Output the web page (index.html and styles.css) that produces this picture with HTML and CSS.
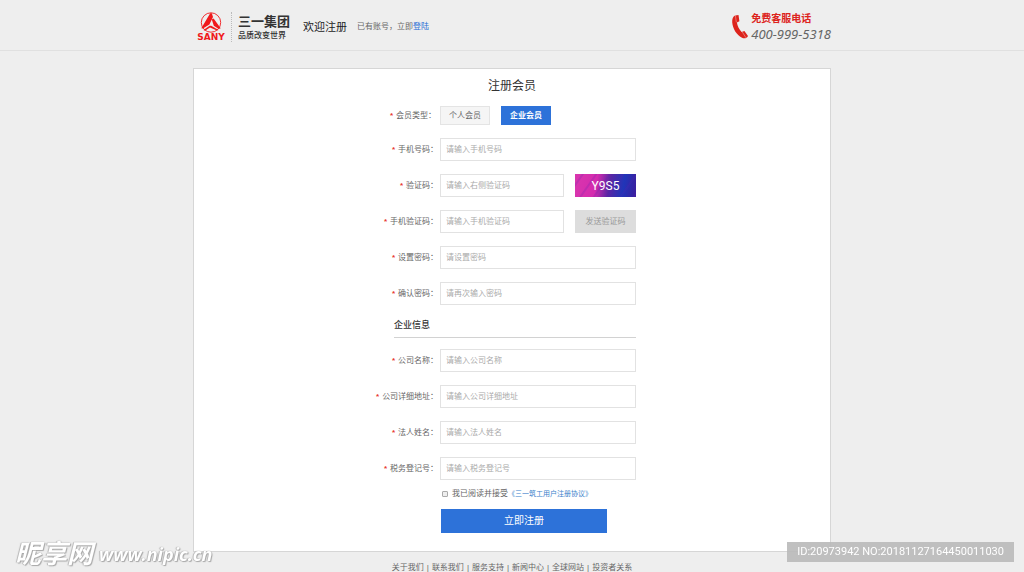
FILE: index.html
```html
<!DOCTYPE html>
<html lang="zh-CN">
<head>
<meta charset="utf-8">
<meta name="viewport" content="width=device-width, initial-scale=1">
<title>注册会员</title>
<link rel="stylesheet" href="styles.css">
</head>
<body>
<header class="header">
  <div class="header-inner">
    <svg class="logo" viewBox="0 0 28 30" role="img" aria-label="SANY">
      <circle cx="14" cy="10.500" r="9.700" fill="none" stroke="#f0191c" stroke-width="0.900"/>
      <path fill="#f0191c" d="M13.200 1.200 14.800 1.200 16 5 12.400 12.500 6 16.500 4.300 16.200ZM14.800 7.500 16.600 6.500 23.700 16.200 21.800 17 16.800 13.800ZM6.500 18 12.600 13.700 14.200 13.700 21.600 18 20 18.600 13 15.600 8 18.800Z"/>
      <text class="logo-word" x="14" y="28" text-anchor="middle">SANY</text>
    </svg>
    <div class="brand">
      <strong class="brand-name">三一集团</strong>
      <span class="brand-slogan">品质改变世界</span>
    </div>
    <span class="welcome">欢迎注册</span>
    <span class="login-hint">已有账号，立即<a class="link-strong" href="#">登陆</a></span>
    <div class="hotline">
      <svg class="phone" viewBox="0 0 18 26" aria-hidden="true">
        <path fill="#dd231c" d="M4 1.500 7.500 1 8.400 7.200 5.900 8.600C6.400 12.200 8 15.400 10.600 17.900L13.400 17 17 22C16 24.300 13.300 25 11 23.700 5.500 21 1.800 14.600 1.200 8.200 1 5 2 2.200 4 1.500Z"/>
        <path stroke="#eee" stroke-width="0.400" fill="none" d="M4.400 1.400 5.300 8.300M11.300 18 15 23.800"/>
      </svg>
      <div class="hotline-text">
        <strong class="hotline-title">免费客服电话</strong>
        <span class="hotline-number">400-999-5318</span>
      </div>
    </div>
  </div>
</header>

<main class="card">
  <h1 class="title">注册会员</h1>
  <form class="form">
    <div class="row row-type">
      <span class="label"><i class="star">*</i>会员类型：</span>
      <button class="type" type="button">个人会员</button>
      <button class="type type-active" type="button">企业会员</button>
    </div>
    <div class="row">
      <label class="label" for="phone"><i class="star">*</i>手机号码：</label>
      <input class="field" id="phone" type="text" placeholder="请输入手机号码">
    </div>
    <div class="row">
      <label class="label" for="captcha"><i class="star">*</i>验证码：</label>
      <input class="field" id="captcha" type="text" placeholder="请输入右侧验证码">
      <button class="side captcha" type="button">Y9S5</button>
    </div>
    <div class="row">
      <label class="label" for="sms"><i class="star">*</i>手机验证码：</label>
      <input class="field" id="sms" type="text" placeholder="请输入手机验证码">
      <button class="side send" type="button">发送验证码</button>
    </div>
    <div class="row">
      <label class="label" for="pwd"><i class="star">*</i>设置密码：</label>
      <input class="field" id="pwd" type="password" placeholder="请设置密码">
    </div>
    <div class="row">
      <label class="label" for="pwd2"><i class="star">*</i>确认密码：</label>
      <input class="field" id="pwd2" type="password" placeholder="请再次输入密码">
    </div>
    <h2 class="section">企业信息</h2>
    <div class="row">
      <label class="label" for="company"><i class="star">*</i>公司名称：</label>
      <input class="field" id="company" type="text" placeholder="请输入公司名称">
    </div>
    <div class="row">
      <label class="label" for="address"><i class="star">*</i>公司详细地址：</label>
      <input class="field" id="address" type="text" placeholder="请输入公司详细地址">
    </div>
    <div class="row">
      <label class="label" for="legal"><i class="star">*</i>法人姓名：</label>
      <input class="field" id="legal" type="text" placeholder="请输入法人姓名">
    </div>
    <div class="row">
      <label class="label" for="tax"><i class="star">*</i>税务登记号：</label>
      <input class="field" id="tax" type="text" placeholder="请输入税务登记号">
    </div>
    <div class="agree">
      <input class="check" id="agree" type="checkbox">
      <label for="agree">我已阅读并接受</label><a class="link" href="#">《三一筑工用户注册协议》</a>
    </div>
    <button class="submit" type="submit">立即注册</button>
  </form>
</main>

<footer class="footer">
  <a class="footer-link" href="#">关于我们</a>
  <a class="footer-link" href="#">联系我们</a>
  <a class="footer-link" href="#">服务支持</a>
  <a class="footer-link" href="#">新闻中心</a>
  <a class="footer-link" href="#">全球网站</a>
  <a class="footer-link" href="#">投资者关系</a>
</footer>

<div class="mark"><span class="mark-name">昵享网</span><span class="mark-url">www.nipic.cn</span></div>
<div class="stamp">ID:20973942 NO:20181127164450011030</div>
</body>
</html>
```
FILE: styles.css
```css
* {
  box-sizing: border-box;
}

body {
  margin: 0;
  background: #eee;
  color: #666;
  font: 8px/10px "Liberation Sans", "Noto Sans CJK SC", sans-serif;
}

button,
input {
  margin: 0;
  border-radius: 0;
  font: inherit;
}

button {
  padding: 0;
  cursor: pointer;
}

a {
  color: inherit;
  text-decoration: none;
}

.header {
  border-bottom: 1px solid #e0e0e0;
}

.header-inner {
  display: flex;
  align-items: center;
  max-width: 638px;
  height: 50px;
  margin: 0 auto;
  padding: 4px 0 0 4px;
}

.logo {
  width: 28px;
  height: 30px;
  margin-right: 6px;
}

.logo-word {
  fill: #f0191c;
  font: bold 9px "DejaVu Sans", sans-serif;
}

.brand {
  display: flex;
  flex-direction: column;
  padding: 1px 0 1px 6px;
  border-left: 1px dotted #bbb;
  color: #333;
}

.brand-name {
  font-size: 13px;
  line-height: 17px;
}

.brand-slogan {
  font-size: 8px;
  font-weight: 500;
  line-height: 11px;
}

.welcome {
  margin-left: 13px;
  color: #222;
  font-size: 11px;
  line-height: 16px;
}

.login-hint {
  margin-left: 10px;
}

.link-strong {
  color: #2b6fd6;
}

.hotline {
  display: flex;
  align-items: center;
  gap: 2px;
  margin-left: auto;
}

.phone {
  width: 18px;
  height: 26px;
}

.hotline-text {
  display: flex;
  flex-direction: column;
}

.hotline-title {
  color: #dd231c;
  font-size: 10px;
  line-height: 14px;
}

.hotline-number {
  font: italic 13px/16px "Noto Sans", sans-serif;
}

.card {
  max-width: 638px;
  margin: 17px auto 0;
  padding: 9px 194px 18px 182px;
  border: 1px solid #d6d6d6;
  background: #fff;
}

.title {
  margin: 0 0 12px 12px;
  color: #333;
  font-size: 12px;
  font-weight: 400;
  line-height: 16px;
  text-align: center;
}

.row {
  display: flex;
  align-items: center;
  height: 23px;
  margin-bottom: 13px;
}

.row-type {
  height: 19px;
}

.label {
  flex: none;
  width: 62px;
  margin-right: 2px;
  text-align: right;
  white-space: nowrap;
}

.row-type .label {
  width: 60px;
  margin-right: 4px;
}

.star {
  margin-right: 3px;
  color: #e8392f;
  font-style: normal;
  font-weight: 700;
}

.type {
  width: 50px;
  height: 19px;
  margin-right: 11px;
  border: 1px solid #e4e4e4;
  background: #f5f5f5;
  color: #666;
}

.type-active {
  border-color: #2d72d9;
  background: #2d72d9;
  color: #fff;
  font-weight: 700;
}

.field {
  flex: 1;
  min-width: 0;
  height: 23px;
  padding: 0 5px;
  border: 1px solid #e2e2e2;
  background: #fff;
  color: #333;
}

.field::placeholder {
  color: #aaa;
}

.side {
  flex: none;
  width: 61px;
  height: 23px;
  margin-left: 11px;
  border: 0;
}

.captcha {
  background:
    repeating-linear-gradient(125deg, transparent 0 5px, #5b1fb033 6px 7px, transparent 8px 11px),
    linear-gradient(100deg, #d936ae 0%, #d42bae 35%, #5826a4 56%, #2035b8 78%, #3d1c9c 100%);
  color: #fff;
  font: 12px/20px "Liberation Sans Narrow", "Roboto", sans-serif;
}

.send {
  background: #ddd;
  color: #999;
}

.section {
  margin: 0 0 11px 18px;
  padding-bottom: 5px;
  border-bottom: 1px solid #d2d2d2;
  color: #333;
  font-size: 9px;
  font-weight: 500;
  line-height: 14px;
}

.agree {
  display: flex;
  align-items: center;
  height: 10px;
  margin: -4px 0 10px 66px;
  white-space: nowrap;
}

.check {
  width: 6px;
  height: 6px;
  margin-right: 4px;
  border: 1px solid #aaa;
  border-radius: 1px;
  background: #eee;
  appearance: none;
}

.check:checked {
  background: #2d72d9;
}

.link {
  color: #3a7fcb;
  font-size: 7px;
}

.submit {
  display: block;
  width: 166px;
  height: 24px;
  margin-left: 65px;
  border: 0;
  background: #2d72d9;
  color: #fff;
  font-size: 10px;
}

.footer {
  display: flex;
  justify-content: center;
  padding-top: 11px;
}

.footer-link + .footer-link::before {
  content: "|";
  margin: 0 3px;
}

.mark {
  position: fixed;
  bottom: 5px;
  left: 15px;
  display: flex;
  align-items: center;
  gap: 6px;
  color: #fff;
  font-style: italic;
  font-weight: 700;
  text-shadow: 0 0 1px #999, 1px 1px 1px #aaa, -1px 0 1px #bbb;
}

.mark-name {
  font-size: 26px;
  line-height: 26px;
}

.mark-url {
  font: italic 700 18px/20px "Open Sans", sans-serif;
}

.stamp {
  position: fixed;
  right: 10px;
  bottom: 10px;
  padding: 0 10px;
  background: #b9b9b9e6;
  color: #fff;
  font: 11px/20px "Roboto", sans-serif;
}
```
